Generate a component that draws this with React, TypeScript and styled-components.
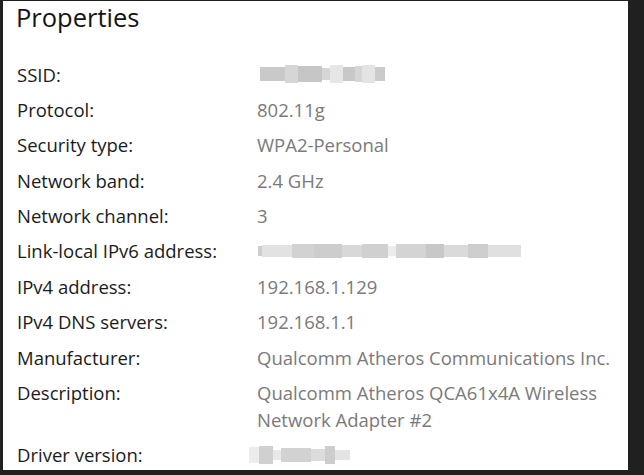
import { Fragment } from 'react';
import { createGlobalStyle, styled } from 'styled-components';

const GlobalStyle = createGlobalStyle`
  html, body {
    margin: 0;
    padding: 0;
    background: #202020;
  }
  body {
    width: 644px;
    height: 475px;
    overflow: hidden;
    font-family: 'Open Sans', 'Noto Sans', sans-serif;
  }
`;

const Frame = styled.div`
  width: 644px;
  height: 475px;
  box-sizing: border-box;
  padding: 1px 16px 5px 3px;
  background: #202020;
`;

const Panel = styled.div`
  width: 625px;
  height: 469px;
  box-sizing: border-box;
  background: #ffffff;
  overflow: hidden;
`;

const Title = styled.h1`
  margin: 0;
  padding-left: 13px;
  font-size: 25.5px;
  font-weight: 400;
  line-height: 32px;
  color: #151515;
`;

const List = styled.div`
  display: grid;
  grid-template-columns: 240px 1fr;
  row-gap: 8.4px;
  margin-top: 27.5px;
  padding-left: 14px;
  font-size: 18.5px;
  line-height: 27px;
`;

const Label = styled.div`
  color: #1b1b1b;
  white-space: nowrap;
`;

const Value = styled.div`
  color: #7a7a7a;
  white-space: nowrap;
`;

const Redacted = styled.div<{ $offset: number }>`
  display: flex;
  align-items: center;
  height: 27px;
  margin-left: ${(p) => p.$offset}px;
`;

const Block = styled.span<{ $w: number; $h: number; $c: string }>`
  display: block;
  width: ${(p) => p.$w}px;
  height: ${(p) => p.$h}px;
  background: ${(p) => p.$c};
`;

type Blur = [number, string, number][];

const ssidBlur: Blur = [
  [25, '#c9c9c9', 14],
  [13, '#d6d6d6', 18],
  [24, '#c6c6c6', 16],
  [8, '#d6d6d6', 12],
  [13, '#e6e6e6', 18],
  [12, '#c8c8c8', 14],
  [7, '#d6d6d6', 16],
  [13, '#e4e4e4', 18],
  [10, '#cbcbcb', 14],
];

const ipv6Blur: Blur = [
  [4, '#cccccc', 10],
  [30, '#e2e2e2', 12],
  [22, '#d2d2d2', 14],
  [28, '#cdcdcd', 14],
  [20, '#d8d8d8', 12],
  [26, '#d0d0d0', 14],
  [8, '#ececec', 10],
  [30, '#d4d4d4', 14],
  [18, '#c8c8c8', 14],
  [24, '#dadada', 12],
  [20, '#cecece', 14],
  [33, '#e0e0e0', 12],
];

const driverBlur: Blur = [
  [10, '#ececec', 16],
  [14, '#d0d0d0', 18],
  [8, '#e8e8e8', 10],
  [30, '#d2d2d2', 14],
  [14, '#dcdcdc', 12],
  [10, '#cdcdcd', 18],
  [15, '#e4e4e4', 10],
];

function Blurred({ blocks, offset }: { blocks: Blur; offset: number }) {
  return (
    <Redacted $offset={offset}>
      {blocks.map(([w, c, h], i) => (
        <Block key={i} $w={w} $h={h} $c={c} />
      ))}
    </Redacted>
  );
}

type Row = { label: string; value: React.ReactNode };

const rows: Row[] = [
  { label: 'SSID:', value: <Blurred blocks={ssidBlur} offset={3} /> },
  { label: 'Protocol:', value: '802.11g' },
  { label: 'Security type:', value: 'WPA2-Personal' },
  { label: 'Network band:', value: '2.4 GHz' },
  { label: 'Network channel:', value: '3' },
  { label: 'Link-local IPv6 address:', value: <Blurred blocks={ipv6Blur} offset={1} /> },
  { label: 'IPv4 address:', value: '192.168.1.129' },
  { label: 'IPv4 DNS servers:', value: '192.168.1.1' },
  { label: 'Manufacturer:', value: 'Qualcomm Atheros Communications Inc.' },
  {
    label: 'Description:',
    value: (
      <>
        Qualcomm Atheros QCA61x4A Wireless
        <br />
        Network Adapter #2
      </>
    ),
  },
  { label: 'Driver version:', value: <Blurred blocks={driverBlur} offset={-8} /> },
];

export default function App() {
  return (
    <>
      <GlobalStyle />
      <Frame>
        <Panel>
          <Title>Properties</Title>
          <List>
            {rows.map((row) => (
              <Fragment key={row.label}>
                <Label>{row.label}</Label>
                <Value>{row.value}</Value>
              </Fragment>
            ))}
          </List>
        </Panel>
      </Frame>
    </>
  );
}
